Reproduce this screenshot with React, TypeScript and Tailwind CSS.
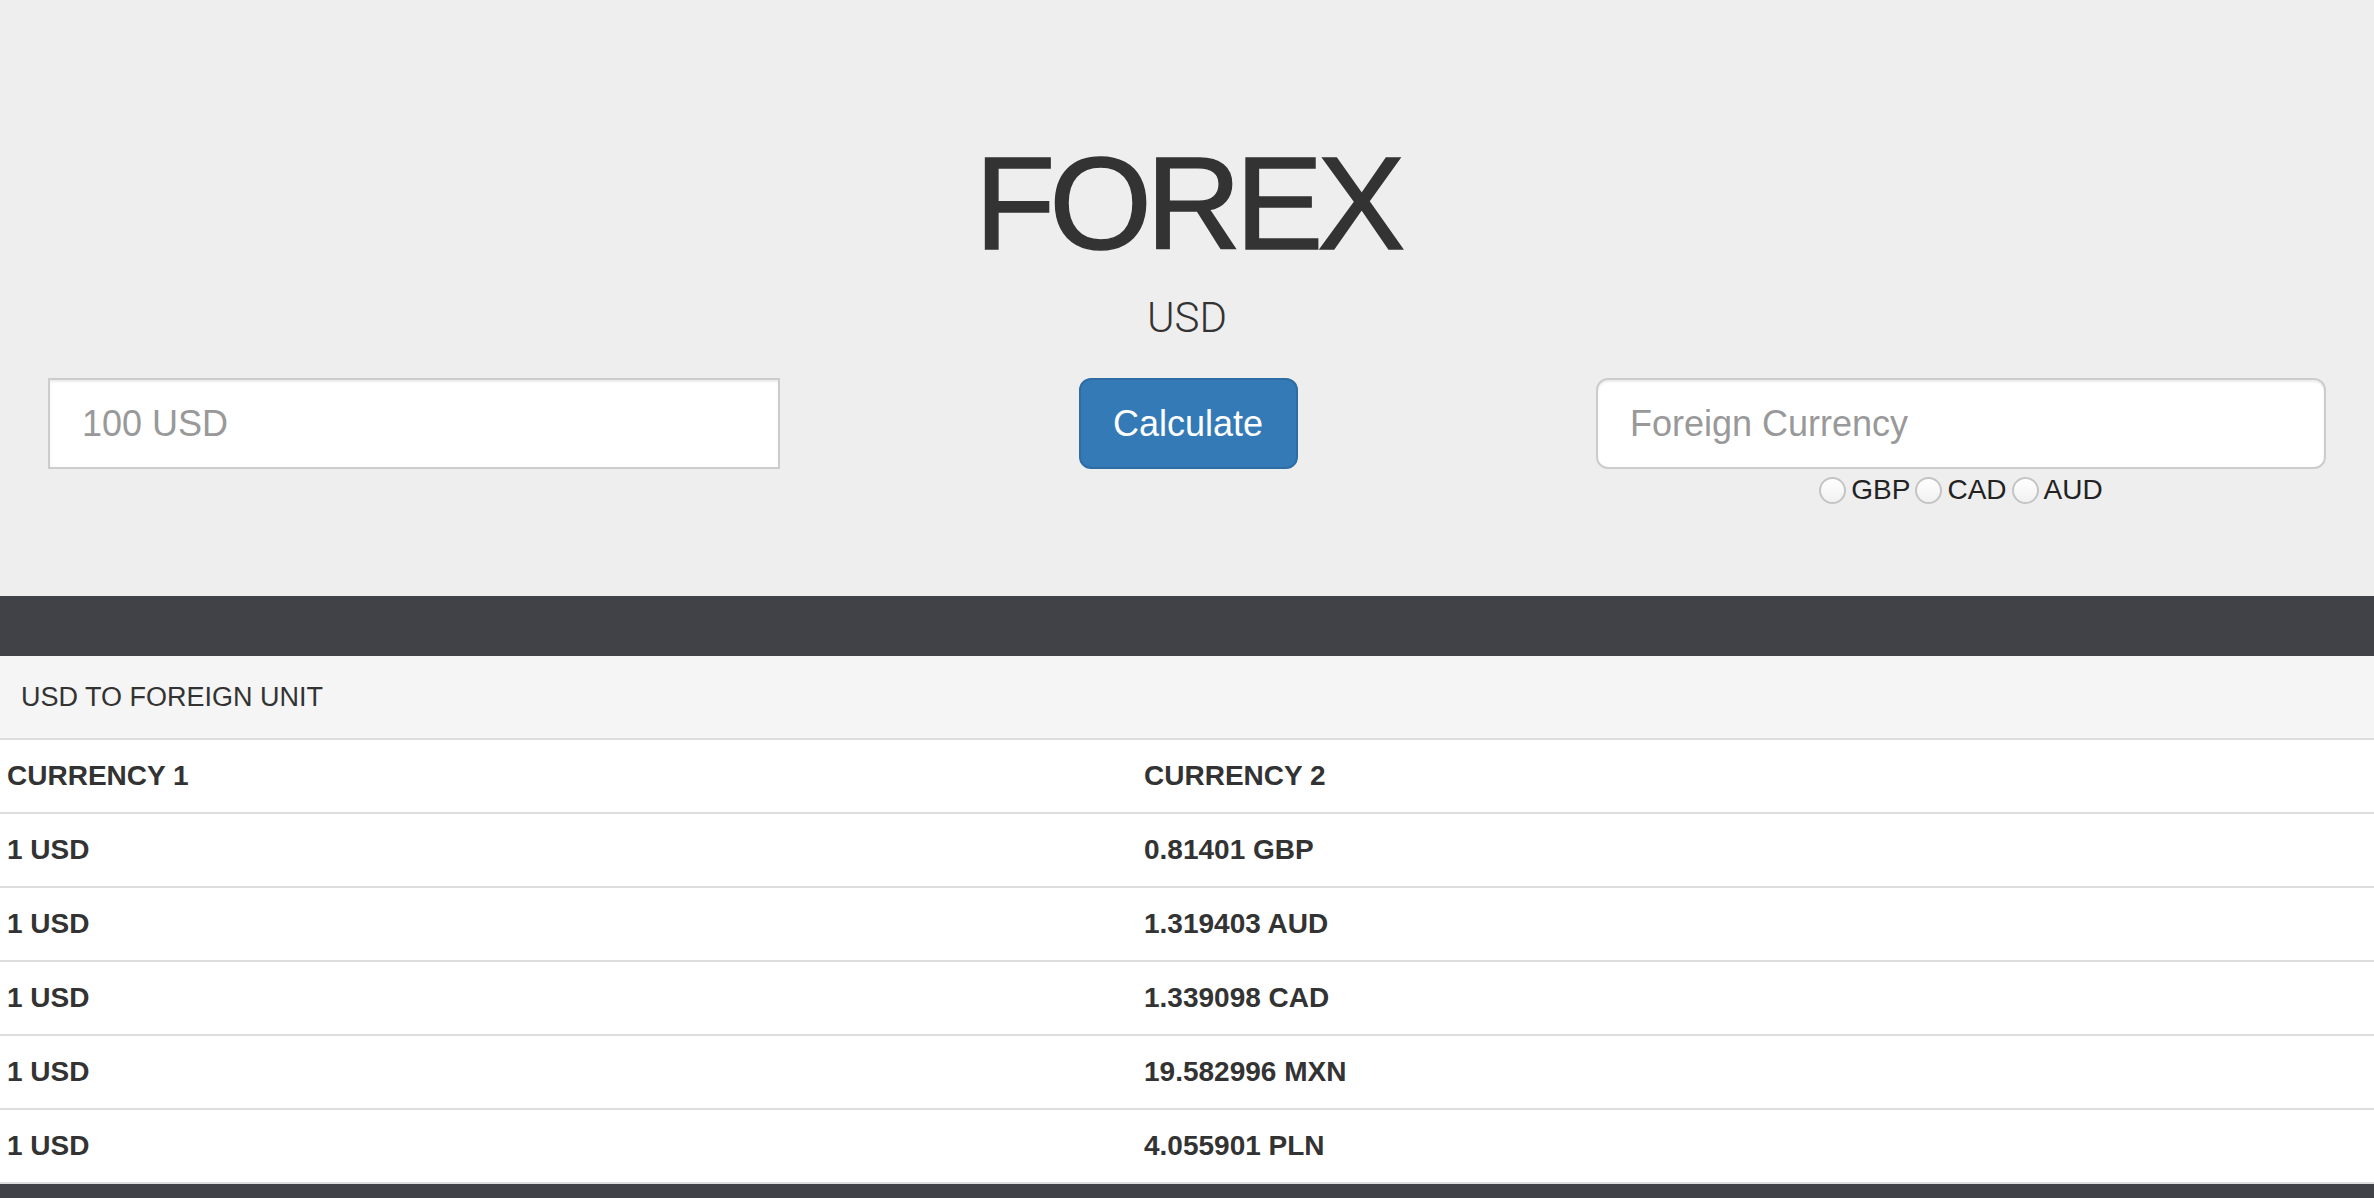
import React from "react";

const rows: [string, string][] = [
  ["1 USD", "0.81401 GBP"],
  ["1 USD", "1.319403 AUD"],
  ["1 USD", "1.339098 CAD"],
  ["1 USD", "19.582996 MXN"],
  ["1 USD", "4.055901 PLN"],
];

function Radio({ label, last }: { label: string; last?: boolean }) {
  return (
    <label className="flex items-center">
      <span className="w-[27px] h-[27px] rounded-full border-2 border-[#c4c4c4] bg-gradient-to-b from-white to-[#f1f1f1] mr-[5px]" />
      <span className={last ? "" : "mr-[5px]"}>{label}</span>
    </label>
  );
}

export default function App() {
  return (
    <div
      className="w-[2374px] h-[1198px] overflow-hidden bg-[#414247] text-[#333]"
      style={{ fontFamily: '"Liberation Sans", Arial, sans-serif' }}
    >
      <div className="h-[596px] bg-[#eeeeee] flex flex-col">
        <h1 className="pt-[134px] text-center text-[132px] leading-[140px] font-normal tracking-[-6px] text-[#333] [-webkit-text-stroke:1.5px_#333]">
          FOREX
        </h1>
        <p
          className="mt-[14px] text-center text-[42px] leading-[60px] font-light text-[#333]"
          style={{ fontFamily: 'Roboto, "Liberation Sans", sans-serif' }}
        >
          USD
        </p>
        <div className="mt-[30px] flex justify-between items-start px-[48px]">
          <div className="w-[732px]">
            <input
              placeholder="100 USD"
              className="w-full h-[91px] border-2 border-[#cccccc] bg-white px-[32px] text-[36px] placeholder:text-[#999] shadow-[inset_0_2px_2px_rgba(0,0,0,0.075)] outline-none"
            />
          </div>
          <button className="w-[219px] h-[91px] rounded-[12px] border-2 border-[#2e6da4] bg-[#337ab7] text-white text-[36px]">
            Calculate
          </button>
          <div className="w-[730px] flex flex-col items-center">
            <input
              placeholder="Foreign Currency"
              className="w-full h-[91px] rounded-[12px] border-2 border-[#cccccc] bg-white px-[32px] text-[36px] placeholder:text-[#999] shadow-[inset_0_2px_2px_rgba(0,0,0,0.075)] outline-none"
            />
            <div className="mt-[5px] flex items-center text-[28px] leading-[32px] text-[#222]">
              <Radio label="GBP" />
              <Radio label="CAD" />
              <Radio label="AUD" last />
            </div>
          </div>
        </div>
      </div>
      <div className="h-[60px] bg-[#414247]" />
      <div className="bg-white">
        <div className="h-[84px] bg-[#f5f5f5] border-b-2 border-[#dddddd] flex items-center pl-[21px] text-[27px]">
          USD TO FOREIGN UNIT
        </div>
        <div className="grid grid-cols-[1137px_1fr] h-[74px] border-b-2 border-[#dddddd] items-center text-[28px] font-bold">
          <div className="pl-[7px]">CURRENCY 1</div>
          <div className="pl-[7px]">CURRENCY 2</div>
        </div>
        {rows.map((r, i) => (
          <div
            key={i}
            className="grid grid-cols-[1137px_1fr] h-[74px] border-b-2 border-[#dddddd] items-center text-[28px] font-bold"
          >
            <div className="pl-[7px]">{r[0]}</div>
            <div className="pl-[7px]">{r[1]}</div>
          </div>
        ))}
      </div>
    </div>
  );
}
